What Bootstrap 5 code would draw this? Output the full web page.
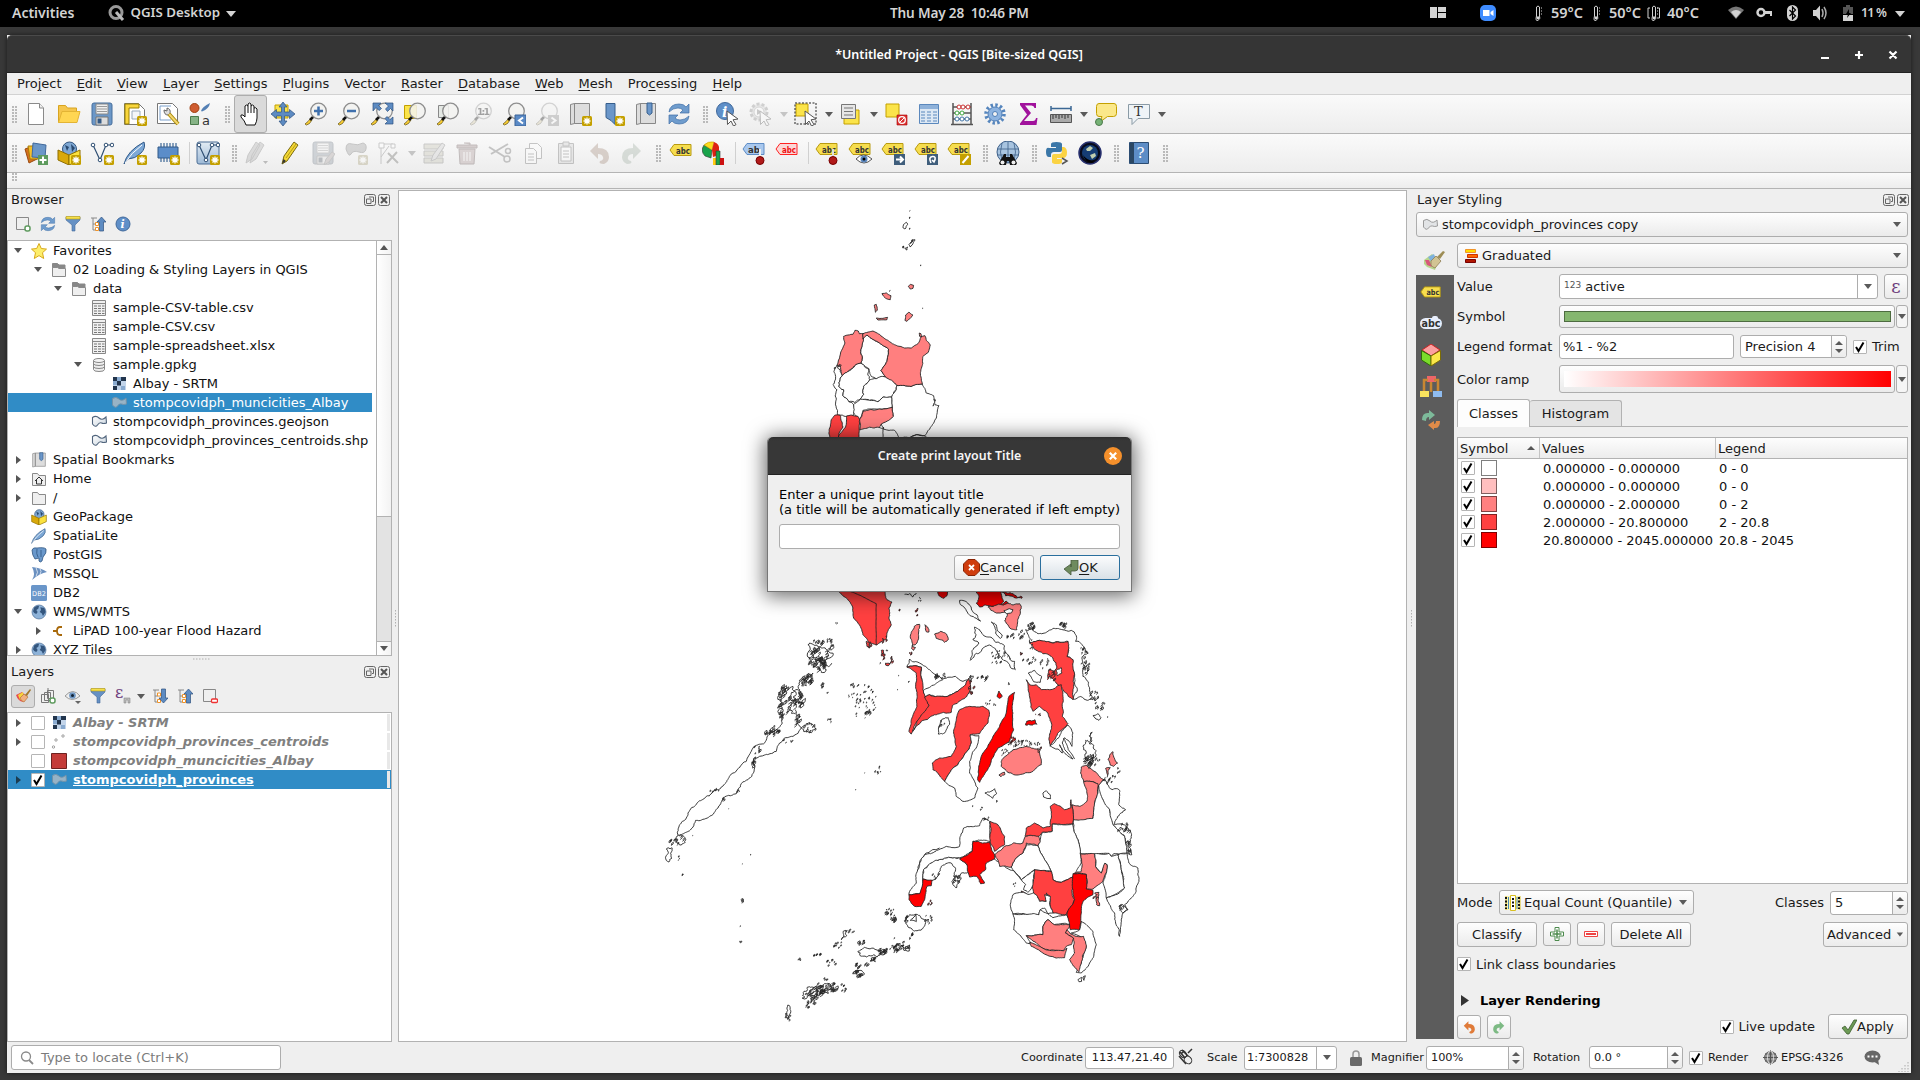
<!DOCTYPE html>
<html lang="en">
<head>
<meta charset="utf-8">
<title>QGIS</title>
<link href="https://cdn.jsdelivr.net/npm/bootstrap@5.3.0/dist/css/bootstrap.min.css" rel="stylesheet">
<style>
body{width:1920px;height:1080px;overflow:hidden;background:#393939;font:13px/15px "DejaVu Sans",sans-serif;color:#1a1a1a}
svg{display:block;flex:none;overflow:visible}
.shell{height:27px;background:#000;color:#d3d3d3;font:600 14px/27px "Noto Sans",sans-serif;position:relative}
.shell .clock{left:890px;top:-1px;white-space:pre;font-size:13.6px;letter-spacing:-.17px}
.win{margin:8px 0 0 7px;width:1904px;height:1038px;background:#efefef;box-shadow:0 0 5px #1b1b1b}
.ttl{height:38px;background:#353535;border-top:1px solid #4a4a4a;border-bottom:1px solid #222;border-radius:5px 5px 0 0;color:#fff;font:600 12.5px/37px "Noto Sans",sans-serif;position:relative}
.mnu{height:22px;border-bottom:1px solid #d2d2d2;padding-left:2.5px}
.mnu span{padding:0 7.55px;line-height:21px}
.mnu u,.dlg u{text-underline-offset:2px}
.tbar{border-bottom:1px solid #b4b4b4;background:linear-gradient(#fafafa,#ededed)}
.tbar.h39{height:39px}.tbar.h16{height:16px}
.tb{width:33px;height:32px;display:flex;align-items:center;justify-content:center;flex:none}
.tb svg{width:24px;height:24px}
.tb.on{height:38px;background:#dadada;border:1px solid #adadad;border-radius:3px}
.off{opacity:.34;filter:grayscale(.75)}
.grip{width:16px;flex:none;padding-left:7px}
.grip.g0{width:12.5px;padding-left:5px}
.grip::before{content:"";display:block;width:5px;height:17px;background:radial-gradient(circle at 1px 1px,#b8b8b8 .7px,transparent 1px) 0 0/3px 3px}
.vs{width:7px;flex:none;height:22px;border-left:1px solid #d0d0d0;transform:translateX(4px)}
.ar{width:12px;flex:none;display:flex;justify-content:center}
.ar::before,.dn::before{content:"";border:4px solid transparent;border-top:5px solid #5a5a5a;border-bottom:0}
.ar.lt{opacity:.3}
.pt{height:22px;padding:0 2px 0 4px}
.pt span{line-height:20px;padding-bottom:1px}
.pt svg{width:12px;height:12px;margin:-1px 0 0 2px}
.box{background:#fff;border:1px solid #b2b2b2;overflow:hidden}
.r19{height:19px;display:flex;align-items:center;white-space:nowrap;color:#111}
.r19>svg{width:16px;height:16px;margin-right:6px}
.r19.sel,.lsel{background:#308cc6;color:#fff}
.ex{width:20px;flex:none;display:flex;justify-content:center}
.ex.o::before{content:"";border:4px solid transparent;border-top:5px solid #555;border-bottom:0}
.ex.c::before{content:"";border:4px solid transparent;border-left:5px solid #555;border-right:0}
.ind1{padding-left:20px}.ind2{padding-left:40px}.ind3{padding-left:60px}.ind4{padding-left:80px}
.sb{width:15px;border-left:1px solid #b2b2b2}
.sb div{background:linear-gradient(90deg,#fff,#f3f3f3)}
.st svg{width:16px;height:16px}
.st .c25{width:25px;display:flex;justify-content:center;align-items:center;height:24px;flex:none}
.cb{width:14px;height:14px;border:1px solid #b5b5b5;background:#fff;flex:none;display:flex;align-items:center;justify-content:center;border-radius:1px}
.cb svg{width:12px;height:12px}
.lay .r19{font-weight:700;color:#808080;font-style:italic}
.lay .r19::after{content:"";margin-left:auto;width:3px;height:17px;background:#e8e8e8;margin-right:1px}
.lay .lsel{color:#fff;font-style:normal;text-decoration:underline}
.lay .lsel .ex.c::before{border-left-color:#1c3c50}
.q{border:1px solid #adadad;border-radius:3px;background:linear-gradient(#fefefe,#ebebeb);display:flex;align-items:center;flex:none;white-space:nowrap}
.in{border:1px solid #adadad;border-radius:3px;background:#fff;display:flex;align-items:center;flex:none;white-space:nowrap;padding-left:4px}
.dn{display:flex;align-items:center;justify-content:center;width:20px;height:100%;margin-left:auto}
.spn{margin-left:auto;width:15px;height:100%;border-left:1px solid #adadad;background:linear-gradient(#fefefe,#ebebeb);display:flex;flex-direction:column;justify-content:center;align-items:center;gap:4px;border-radius:0 3px 3px 0}
.spn::before{content:"";border:4px solid transparent;border-bottom:4px solid #5a5a5a;border-top:0}
.spn::after{content:"";border:4px solid transparent;border-top:4px solid #5a5a5a;border-bottom:0}
.lb{width:102px;flex:none}
.tabx{border:1px solid #b2b2b2;border-bottom:0;border-radius:3px 3px 0 0;display:flex;align-items:center;justify-content:center}
.strip{width:38px;background:#5c5c5c}
.strip svg{width:22px;height:22px;margin:0 0 10px 4px}
.hd{height:21px;border-bottom:1px solid #b2b2b2;background:linear-gradient(#fdfdfd,#ececec)}
.hd>div{padding-left:2px;display:flex;align-items:center;border-right:1px solid #c4c4c4}
.cls{height:18px;display:flex;align-items:center;color:#111;padding-left:3px}
.sw{width:16px;height:16px;border:1px solid #00000080;margin-left:6px;flex:none}
.stat{height:31px;font-size:11.3px;padding:0 0 0 4px}
.dlg{position:absolute;left:767px;top:437px;width:365px;height:155px;background:#efefef;border:1px solid #777;border-top:0;border-radius:5px 5px 0 0;box-shadow:0 2px 20px 2px #0009}
.dlg .dt{height:38px;background:linear-gradient(#2d2d2d,#373737 10%);border-bottom:1px solid #222;border-radius:5px 5px 0 0;color:#f5f5f5;font:600 12.4px/38px "Noto Sans",sans-serif;position:relative}
</style>
<script src="https://cdn.jsdelivr.net/npm/bootstrap@5.3.0/dist/js/bootstrap.bundle.min.js"></script>
</head>
<body>
<svg width="0" height="0" style="position:absolute">
<defs>
<linearGradient id="gl" x2="1" y2="1"><stop stop-color="#fff"/><stop offset="1" stop-color="#c9d4de"/></linearGradient>
<linearGradient id="gb" y2="1" x2="0"><stop stop-color="#e3ecf4"/><stop offset="1" stop-color="#9db9d6"/></linearGradient>
<g id="new"><rect x="14" y="14" width="10" height="10" rx="1.500" fill="#c4a000"/><path d="M19 15.500v7M15.500 19h7M16.500 16.500l5 5M21.500 16.500l-5 5" stroke="#fff" stroke-width="1.300"/></g>
<g id="lens"><path d="M1 22l3-2.500 2.500-3 1.500 1.500-2.500 3.500-3 1.500z" fill="#fcd033" stroke="#5a4a10" stroke-width=".7"/><path d="M6 18l4-4" stroke="#111" stroke-width="2.500"/><circle cx="14.500" cy="9" r="7.800" fill="#f2f2f0dd" stroke="#8f8f8f" stroke-width="1.300"/></g>
<g id="cur"><path d="M11 9l11 8-5 .8 3 4.800-2.500 1.400-2.500-5-3.500 3.500z" fill="#fff" stroke="#555"/></g>
<g id="tag"><path d="M1 8l4-5.500h17v11H5z" fill="#f6dd4e" stroke="#b89a10"/><text x="7" y="11.500" font-size="8.500" font-weight="700" font-family="DejaVu Sans" textLength="14" lengthAdjust="spacingAndGlyphs" fill="#333">abc</text></g>
<g id="globe"><circle cx="12" cy="12" r="10.500" fill="#8db2d8" stroke="#486a93"/><path d="M5 5q4-3 7-2l-1 4-3 2 2 3-2 3q-4-1-5-4zM14 5l6 1 2 6-4 6-2-4-3-2 2-3z" fill="#34567e"/></g>
<symbol id="doc" viewBox="0 0 24 24"><path d="M4.500 1.500h11l4 4.500v16.500h-15z" fill="#fff" stroke="#8a8a8a"/><path d="M15.500 1.500v4.500h4" fill="#eee" stroke="#8a8a8a"/></symbol>
<symbol id="open" viewBox="0 0 24 24"><path d="M1.500 20.500V3.500h7l2 2.500h9v4" fill="#f5c64c" stroke="#d8a420"/><path d="M1.500 20.500L5 9.500h18l-3 11z" fill="#ffd652" stroke="#e3b434"/></symbol>
<symbol id="save" viewBox="0 0 24 24"><rect x="2" y="1" width="20" height="22" rx="2" fill="#6b97c8" stroke="#476e9c"/><path d="M6 2h12v10H6z" fill="#efefef" stroke="#888"/><path d="M7 4.500h10M7 7h10M7 9.500h10" stroke="#999"/><path d="M6 15h12v8H6z" fill="#ddd" stroke="#777"/><path d="M7.500 16.500h4v5h-4z" fill="#355a85"/></symbol>
<symbol id="lay" viewBox="0 0 24 24"><path d="M1.500 1.500h14l6 6v15h-20z" fill="#fff" stroke="#777"/><path d="M2 2h14v4H6v16H2z" fill="#f9d63c" stroke="#9c8203"/><path d="M9 9h8v8H9z" fill="#f4f6f8" stroke="#9ab"/><use href="#new"/></symbol>
<symbol id="wrench" viewBox="0 0 24 24"><path d="M1.500 1.500h15l5 5v15h-20z" fill="#fff" stroke="#777"/><path d="M4 4h11M4 4v14h11" stroke="#7aa0cc" fill="none"/><path d="M8 8q0 5 4 5l2-2q1-4-3-5l0 3z" fill="#ddd" stroke="#666"/><path d="M13 12l9 10" stroke="#a88908" stroke-width="4"/><path d="M13 12l9 10" stroke="#f3d66f" stroke-width="2"/></symbol>
<symbol id="style" viewBox="0 0 24 24"><circle cx="5.500" cy="6" r="4.500" fill="#cf5c30" stroke="#a04010"/><path d="M12 9q1-4 9-8-1 6-8 8.500z" fill="#5480b4"/><path d="M1.500 14.500h8v8h-8z" fill="#86b386" stroke="#4b7a4b"/><text x="13" y="23" font-size="13" font-family="DejaVu Sans" fill="#333">a</text></symbol>
<symbol id="hand" viewBox="0 0 24 24"><path d="M8 23q-1-4-5-8-1-3 2-2l2 2V4q1.500-2 3 0V2q1.500-2 3 0v2q1.500-2 3 0v2q2-1 3 1v9q0 3-2 7z" fill="#fff" stroke="#111"/><path d="M10 4v7M13 4v7M16 6v5" stroke="#111"/></symbol>
<symbol id="pan" viewBox="0 0 24 24"><path d="M4 3h13v13H4z" fill="#fbe44a" stroke="#c4a000"/><path d="M12 0l4 5h-2.500v5h5V7.500L24 12l-5.500 4.500V14h-5v5H16l-4 5-4-5h2.500v-5h-5v2.500L0 12l5.500-4.500V10h5V5H8z" fill="#5d8bc2" stroke="#2e5280" stroke-width=".7"/></symbol>
<symbol id="zin" viewBox="0 0 24 24"><use href="#lens"/><path d="M14.500 4.500v9M10 9h9" stroke="#3f70ad" stroke-width="2.500"/></symbol>
<symbol id="zout" viewBox="0 0 24 24"><use href="#lens"/><path d="M10 9h9" stroke="#3f70ad" stroke-width="2.500"/></symbol>
<symbol id="zfull" viewBox="0 0 24 24"><use href="#lens"/><path d="M3 1h8l-2.500 2.500 3 3-2.500 2-3-3L3 9zM23 1v8l-2.500-2.500-3 3-2-2.500 3-3L15 1zM23 22h-8l2.500-2.500-2.500-3 2-2 3 3L23 15z" fill="#5d8bc2" stroke="#2e5280" stroke-width=".7"/></symbol>
<symbol id="zsel" viewBox="0 0 24 24"><path d="M1.500 3.500h12v13h-12z" fill="#fbe44a" stroke="#c4a000"/><use href="#lens"/></symbol>
<symbol id="zlay" viewBox="0 0 24 24"><path d="M2.500 3.500h10v12h-10z" fill="#e4e8e4" stroke="#888"/><use href="#lens"/></symbol>
<symbol id="z11" viewBox="0 0 24 24"><use href="#lens"/><text x="8" y="13" font-size="9.500" font-weight="700" font-family="DejaVu Sans" textLength="13">1:1</text></symbol>
<symbol id="zlast" viewBox="0 0 24 24"><use href="#lens"/><path d="M13 13h11v11H13z" fill="#5a8ac6" stroke="#3a6396"/><path d="M21 15.500l-4 3 4 3" stroke="#fff" stroke-width="2" fill="none"/></symbol>
<symbol id="znext" viewBox="0 0 24 24"><use href="#lens"/><path d="M13 13h11v11H13z" fill="#888"/><path d="M16.500 15.500l4 3-4 3" stroke="#fff" stroke-width="2" fill="none"/></symbol>
<symbol id="book" viewBox="0 0 24 24"><path d="M2.500 2.500l4-1v20l-4 1zM6.500 1.500h15v20h-15z" fill="#ddd" stroke="#888"/></symbol>
<symbol id="vnew" viewBox="0 0 24 24"><use href="#book"/><use href="#new"/></symbol>
<symbol id="bnew" viewBox="0 0 24 24"><path d="M5 1.500h9v21l-4-4-5-3z" fill="#6a96c9" stroke="#365e8c"/><use href="#new"/></symbol>
<symbol id="bmk" viewBox="0 0 24 24"><use href="#book"/><path d="M13 1h5v10l-2.500 2L13 11z" fill="#6a96c9" stroke="#365e8c"/></symbol>
<symbol id="ref" viewBox="0 0 24 24"><path d="M2 10Q3 2 12 2q5 0 7 3l3-3v9h-9l3-3q-2-2-5-2-5 0-9 4zM22 14q-1 8-10 8-5 0-7-3l-3 3v-9h9l-3 3q2 2 5 2 5 0 9-4z" fill="#6f9ccd" stroke="#3f6fa6" stroke-width=".7"/></symbol>
<symbol id="ident" viewBox="0 0 24 24"><circle cx="9" cy="9" r="8.500" fill="#5f8fc8" stroke="#41699b"/><text x="6" y="14.500" font-family="DejaVu Serif" font-style="italic" font-weight="700" font-size="14" fill="#fff">i</text><use href="#cur"/></symbol>
<symbol id="act" viewBox="0 0 24 24"><circle cx="10" cy="10" r="8" fill="#ccc" stroke="#888" stroke-width="3" stroke-dasharray="3 2"/><circle cx="10" cy="10" r="5" fill="#fff" stroke="#999"/><path d="M8 7v6l5-3z" fill="#777"/><use href="#cur"/></symbol>
<symbol id="sel" viewBox="0 0 24 24"><path d="M2 2h12v12H2z" fill="#fbe44a" stroke="#c4a000"/><path d="M1 1h21v21H1z" fill="none" stroke="#222" stroke-dasharray="2 1.500"/><use href="#cur"/></symbol>
<symbol id="form" viewBox="0 0 24 24"><path d="M5 8h15v14H5z" fill="#fbe44a" stroke="#c4a000"/><path d="M2.500 2.500h14v14h-14z" fill="#e6e6e6" stroke="#777"/><path d="M5 6h9M5 9.500h9M5 13h9" stroke="#777"/></symbol>
<symbol id="desel" viewBox="0 0 24 24"><path d="M2 2h13v13H2z" fill="#fbe44a" stroke="#c4a000"/><path d="M13 13h10v10H13z" fill="#d33" stroke="#a00" stroke-width=".6"/><circle cx="18" cy="18" r="3.300" fill="none" stroke="#fff" stroke-width="1.300"/><path d="M16 20l4-4" stroke="#fff"/></symbol>
<symbol id="tab" viewBox="0 0 24 24"><path d="M2.500 2.500h19v19h-19z" fill="#dde8f4" stroke="#5b88bd"/><path d="M3 3h18v4H3z" fill="#8fb2da"/><path d="M4 10h4M10 10h4M16 10h4M4 13h4M10 13h4M16 13h4M4 16h4M10 16h4M16 16h4M4 19h4M10 19h4M16 19h4" stroke="#5b88bd"/></symbol>
<symbol id="abac" viewBox="0 0 24 24"><path d="M3 1v21M21 1v21M1 22.500h22M3 5h18M3 11h18M3 17h18" stroke="#555" stroke-width="1.500"/><g stroke="#c33" fill="#fff"><circle cx="9" cy="5" r="2"/><circle cx="13" cy="5" r="2"/><circle cx="18" cy="5" r="2"/></g><g stroke="#4a4" fill="#fff"><circle cx="7" cy="11" r="2"/><circle cx="12" cy="11" r="2"/></g><g stroke="#47a" fill="#fff"><circle cx="7" cy="17" r="2"/><circle cx="12" cy="17" r="2"/><circle cx="17" cy="17" r="2"/></g></symbol>
<symbol id="gear" viewBox="0 0 24 24"><circle cx="12" cy="12" r="9" fill="none" stroke="#5585bd" stroke-width="3.500" stroke-dasharray="2.400 2.312"/><circle cx="12" cy="12" r="7" fill="#8db3e0" stroke="#4f7fb8"/><circle cx="12" cy="12" r="2.500" fill="#f3f3f3" stroke="#4f7fb8"/></symbol>
<symbol id="sigma" viewBox="0 0 24 24"><path d="M4 1h16v5h-1.500q-.5-2.500-3-2.500H9l6 7.500-7 8h9q2.500 0 3-3h1.500l-1 7H4v-1.500l7-9L4 3z" fill="#a1129c"/></symbol>
<symbol id="meas" viewBox="0 0 24 24"><path d="M2 6.500h20M2 4v5M22 4v5" stroke="#3b6794" stroke-width="1.500"/><path d="M1.500 12.500h21v8h-21z" fill="#aaa" stroke="#555"/><path d="M4 13v4M7 13v3M10 13v4M13 13v3M16 13v4M19 13v3" stroke="#333"/></symbol>
<symbol id="tip" viewBox="0 0 24 24"><path d="M5 1.500h15q2.500 0 2.500 3v7q0 3-3 3h-6L6 20l2-5.500H5q-2.500 0-2.500-3v-7q0-3 2.500-3z" fill="#fbe88a" stroke="#c4a000"/><circle cx="5" cy="20" r="3.500" fill="#76b276" stroke="#4b7a4b"/></symbol>
<symbol id="txt" viewBox="0 0 24 24"><path d="M1.500 2.500h21v14H11l-6 6v-6H1.500z" fill="#eef3f7" stroke="#8a9aa5"/><text x="7" y="14" font-size="13" font-family="DejaVu Serif" fill="#333">T</text></symbol>
<symbol id="dsm" viewBox="0 0 24 24"><path d="M1 8l8-3 4 13-8 4z" fill="#d4701e" stroke="#9a4a10"/><path d="M4 5h10v13H6z" fill="#f4bf2b" stroke="#a87d08"/><path d="M9 2l13 2-1 13-13-1z" fill="#6b97c8" stroke="#41699b"/><path d="M14 14h10v10H14z" fill="#5d9a5d"/><path d="M19 15.500v7M15.500 19h7" stroke="#fff" stroke-width="2"/></symbol>
<symbol id="gpkg" viewBox="0 0 24 24"><circle cx="12.500" cy="8" r="7" fill="#7fa8d4" stroke="#31557f"/><path d="M8 4l4 2-2 4zM14 3l4 4-3 4z" fill="#29496f"/><path d="M1 9l11 5v10L1 19z" fill="#d9a90b" stroke="#8f6f00"/><path d="M12 14l11-5v10l-11 5z" fill="#fbe23f" stroke="#8f6f00"/></symbol>
<symbol id="gpkgn" viewBox="0 0 24 24"><use href="#gpkg"/><use href="#new"/></symbol>
<symbol id="shp" viewBox="0 0 24 24"><path d="M3 4l7 15L16 4h6" fill="none" stroke="#2f4f73" stroke-width="1.200"/><g fill="#fff" stroke="#2f4f73"><circle cx="3" cy="4" r="1.800"/><circle cx="10" cy="19" r="1.800"/><circle cx="16" cy="4" r="1.800"/><circle cx="22" cy="4" r="1.800"/></g></symbol>
<symbol id="shpn" viewBox="0 0 24 24"><use href="#shp"/><use href="#new"/></symbol>
<symbol id="fea" viewBox="0 0 24 24"><path d="M1 23Q4 10 21 1q2 6-3 11-6 6-13 6z" fill="#7da8d6" stroke="#325a88"/><path d="M2 22Q8 12 19 4" stroke="#fff" fill="none"/></symbol>
<symbol id="fean" viewBox="0 0 24 24"><use href="#fea"/><use href="#new"/></symbol>
<symbol id="chip" viewBox="0 0 24 24"><path d="M5 2v19M8 2v19M11 2v19M14 2v19M17 2v19M20 2v19" stroke="#3d6795" stroke-width="1.200"/><path d="M2 6h20v11H2z" fill="#5b8dc9" stroke="#325a88"/><use href="#new"/></symbol>
<symbol id="virt" viewBox="0 0 24 24"><rect x="1" y="1" width="22" height="22" rx="2" fill="url(#gb)" stroke="#4a6d94"/><use href="#shp"/><use href="#new"/></symbol>
<symbol id="pens" viewBox="0 0 24 24"><path d="M1 22l2-8L11 1l4 3-8 14zM5 22l2-8L15 1l4 3-8 14z" fill="#aaa" stroke="#777"/><path d="M18 20h5l-2.500 3z" fill="#555"/></symbol>
<symbol id="pen" viewBox="0 0 24 24"><path d="M4 23l2-8L16 1l4 3L9 20z" fill="#f4d733" stroke="#7a6a10"/><path d="M8 17L18 3" stroke="#b39b1c"/><path d="M4 23l1.500-5 2.500 2z" fill="#333"/></symbol>
<symbol id="savee" viewBox="0 0 24 24"><use href="#save"/><path d="M13 24l2-6 6-7 3 2-6 8z" fill="#b99" stroke="#777"/></symbol>
<symbol id="addp" viewBox="0 0 24 24"><path d="M2 8q0-7 6-5t11-1q4 1 3 6t-7 3-8 2-5-5z" fill="#999" stroke="#666"/><use href="#new"/></symbol>
<symbol id="vert" viewBox="0 0 24 24"><path d="M4 23V3h12M4 16l8-11" stroke="#777" fill="none"/><path d="M2 2h5v5H2zM14 3h4v4h-4z" fill="#fff" stroke="#777"/><path d="M11 12l10 10M20 11L10 22" stroke="#665" stroke-width="2"/></symbol>
<symbol id="mod" viewBox="0 0 24 24"><path d="M2 3h19v5H2zM2 10h19v5H2zM2 17h19v5H2z" fill="#c9c480" stroke="#776"/><path d="M9 20l2-6L20 2l3 2-9 14z" fill="#ccc" stroke="#777"/></symbol>
<symbol id="del" viewBox="0 0 24 24"><path d="M4 8h16l-1 15H5z" fill="#d88" stroke="#844"/><path d="M2 4h20v3H2zM9 2h6v2" fill="#c77" stroke="#844"/><path d="M9 11v9M12 11v9M15 11v9" stroke="#fff"/></symbol>
<symbol id="cut" viewBox="0 0 24 24"><path d="M1 6l16 10M3 13L20 3" stroke="#666" stroke-width="2"/><circle cx="19" cy="18" r="3" fill="none" stroke="#666" stroke-width="1.500"/><circle cx="20" cy="10" r="2.500" fill="none" stroke="#666" stroke-width="1.500"/></symbol>
<symbol id="copy" viewBox="0 0 24 24"><path d="M8.500 2.500h8l4 4v11h-12z" fill="#fff" stroke="#666"/><path d="M4.500 7.500h8l3 3v12h-11z" fill="#fff" stroke="#666"/><path d="M7 13h6M7 16h6M7 19h6" stroke="#666"/></symbol>
<symbol id="paste" viewBox="0 0 24 24"><path d="M4.500 2.500h15v20h-15z" fill="#ccc" stroke="#666"/><path d="M7 6h10v14H7z" fill="#fff" stroke="#666"/><path d="M9 1h6v4H9zM9 10h6M9 13h6M9 16h6" stroke="#666" fill="#ccc"/></symbol>
<symbol id="undo" viewBox="0 0 24 24"><path d="M3 10l8-8v5q11 0 11 9 0 5-5 7-6 0-4-3 4-1 3-4t-5-3v5z" fill="#e07b39"/></symbol>
<symbol id="redo" viewBox="0 0 24 24"><path d="M21 10l-8-8v5Q2 7 2 16q0 5 5 7 6 0 4-3-4-1-3-4t5-3v5z" fill="#7dba84"/></symbol>
<symbol id="label" viewBox="0 0 24 24"><use href="#tag" y="1"/></symbol>
<symbol id="slabel" viewBox="0 0 24 24"><use href="#tag" y="5"/></symbol>
<symbol id="diag" viewBox="0 0 24 24"><path d="M10 9L2 4q-4 6 1 11l6 2z" fill="#19a34a" stroke="#333" stroke-width=".6"/><path d="M2 4q4-4 10-3l-2 8z" fill="#fcdc1b" stroke="#b80" stroke-width=".5"/><path d="M10 9l2-8q6 2 5 8t-6 7z" fill="#d21"/><path d="M11 17h3v7h-3z" fill="#fc1"/><path d="M14 10h4v14h-4z" fill="#19a34a" stroke="#333" stroke-width=".6"/><path d="M18 17h4v7h-4z" fill="#c11"/></symbol>
<symbol id="pin" viewBox="0 0 24 24"><path d="M1 8l4-5.500h17v11H5z" fill="#a9c8ee" stroke="#5e8cc5"/><text x="6" y="11.500" font-size="8.500" font-weight="700" font-family="DejaVu Sans" fill="#333">ab</text><path d="M18 8v8" stroke="#eee" stroke-width="2"/><circle cx="18" cy="19.500" r="4" fill="#b11a1a" stroke="#700"/></symbol>
<symbol id="rlab" viewBox="0 0 24 24"><path d="M1 8l4-5.500h17v11H5z" fill="#fbd6d6" stroke="#f22"/><text x="7" y="11.500" font-size="8.500" font-weight="700" font-family="DejaVu Sans" textLength="14" lengthAdjust="spacingAndGlyphs" fill="#e11">abc</text></symbol>
<symbol id="t1" viewBox="0 0 24 24"><use href="#tag"/><path d="M18 8v8" stroke="#ddd" stroke-width="2"/><circle cx="18" cy="19.500" r="4" fill="#b11a1a" stroke="#700"/></symbol>
<symbol id="t2" viewBox="0 0 24 24"><use href="#tag"/><path d="M8 18q7-8 16 0-8 8-16 0z" fill="#fff" stroke="#555"/><circle cx="16" cy="18" r="3.500" fill="#5a86bd"/><circle cx="16" cy="18" r="1.500"/></symbol>
<symbol id="t3" viewBox="0 0 24 24"><use href="#tag"/><path d="M13 13h11v11H13z" fill="#3f5e7c"/><path d="M15 18.500h7M19 15.500l3 3-3 3" stroke="#fff" stroke-width="2" fill="none"/></symbol>
<symbol id="t4" viewBox="0 0 24 24"><use href="#tag"/><path d="M13 13h11v11H13z" fill="#3f5e7c"/><path d="M17 22q-3-6 1.500-6.500T20 21l-2-2" stroke="#fff" stroke-width="1.600" fill="none"/></symbol>
<symbol id="t5" viewBox="0 0 24 24"><use href="#tag"/><path d="M13 13h11v11H13z" fill="#c4a000"/><path d="M15.500 22l6-7" stroke="#fff" stroke-width="2"/></symbol>
<symbol id="bino" viewBox="0 0 24 24"><circle cx="12" cy="11" r="11" fill="#a8c4e0" stroke="#3d5f88"/><path d="M2 8h20M2 14h20M12 0v22M6 2q-3 9 0 18M18 2q3 9 0 18" stroke="#3d5f88" stroke-width=".8" fill="none"/><path d="M3 22l5-9h2v3h4v-3h2l5 9-1 2h-6l-1-4h-2l-1 4H4z" fill="#111"/><circle cx="6.500" cy="21.500" r="2" fill="#eee"/><circle cx="17.500" cy="21.500" r="2" fill="#eee"/></symbol>
<symbol id="py" viewBox="0 0 24 24"><path d="M6 6V3q0-2 5.500-2T17 3v6q0 2-2 2H9q-3 0-3 3v2H4q-3 0-3-5t3-4h7V6z" fill="#3b77a8"/><path d="M17 6h2q3 1 3 5.500T19 17h-7v1h5v3q0 2-5 2t-5-2v-6q0-2 2-2h5q3 0 3-3z" fill="#fbd343"/><path d="M17 17l5 3-5 3" fill="none" stroke="#555" stroke-width="1.500"/></symbol>
<symbol id="earth" viewBox="0 0 24 24"><circle cx="12" cy="12" r="11" fill="#080b1c" stroke="#27306e" stroke-width="1.500"/><circle cx="12" cy="12" r="8" fill="#163d74"/><path d="M8 8l4-3 3 2-3 3-3 0zM12 14l5-2 1 3-4 3z" fill="#c2cfb0"/><path d="M5 14q5 7 12 5l-3 3q-7-1-9-8z" fill="#000"/></symbol>
<symbol id="help" viewBox="0 0 24 24"><path d="M2.500 1.500h19v21h-19z" fill="#5d8dc6" stroke="#2c4d73"/><path d="M3 2h4v20H3z" fill="#2b4763"/><text x="9.500" y="17" font-size="15" font-family="DejaVu Serif" fill="#fff">?</text></symbol>
<symbol id="float" viewBox="0 0 12 12"><rect x=".5" y=".5" width="11" height="11" rx="2" fill="none" stroke="#666"/><path d="M5 3h4.500v4.500H8M2.500 5H7v4.500H2.500z" fill="none" stroke="#666"/></symbol>
<symbol id="close" viewBox="0 0 12 12"><rect x=".5" y=".5" width="11" height="11" rx="2" fill="none" stroke="#666"/><path d="M3 3l6 6M9 3l-6 6" stroke="#555" stroke-width="2"/></symbol>
<symbol id="addl" viewBox="0 0 16 16"><path d="M1.500 1.500h12v12h-12z" fill="none" stroke="#888"/><rect x="10" y="10" width="5" height="5" rx="2" fill="#fff" stroke="#5d9a5d" stroke-width="1.500"/></symbol>
<symbol id="fun" viewBox="0 0 16 16"><path d="M1 1h14v3l-5 5v6H7V9L1 4z" fill="#6590c4" stroke="#41699b" stroke-width=".6"/><path d="M1 .5h14v2.500H1z" fill="#f5e04a" stroke="#b89a10" stroke-width=".6"/></symbol>
<symbol id="col" viewBox="0 0 16 16"><path d="M1 2h6M3 2v12h4M3 8h3" stroke="#888" fill="none"/><path d="M5.500 6.500h3v3h-3zM5.500 11.500h3v3h-3z" fill="#fff" stroke="#f0942a"/><path d="M11.500 1l4.500 5h-2.500v9h-4V6H7z" fill="#5d8bc2" stroke="#2e5280" stroke-width=".7"/></symbol>
<symbol id="expd" viewBox="0 0 16 16"><path d="M1 2h6M3 2v12h4M3 8h3" stroke="#888" fill="none"/><path d="M5.500 5h3v3h-3zM5.500 11.500h3v3h-3z" fill="#fff" stroke="#f0942a"/><path d="M11.500 15L16 10h-2.500V1h-4v9H7z" fill="#5d8bc2" stroke="#2e5280" stroke-width=".7"/></symbol>
<symbol id="info" viewBox="0 0 16 16"><circle cx="8" cy="8" r="7" fill="#5f8fc8" stroke="#41699b"/><text x="5.500" y="12" font-family="DejaVu Serif" font-style="italic" font-weight="700" font-size="11" fill="#fff">i</text></symbol>
<symbol id="star" viewBox="0 0 16 16"><path d="M8 .5l2.300 5 5.200.6-4 3.600 1.200 5.800L8 12.600 3.300 15.500l1.200-5.800-4-3.600 5.200-.6z" fill="#fdee6b" stroke="#d8a81a"/></symbol>
<symbol id="fol" viewBox="0 0 16 16"><path d="M1.500 2.500h5l1.500 2h6.500v10h-13z" fill="#efefef" stroke="#8a8a8a"/></symbol>
<symbol id="folo" viewBox="0 0 16 16"><path d="M1.500 1.500h5l1.500 1.500h6v3h-12.500z" fill="#888" stroke="#888"/><path d="M1.500 14.500v-9h5l1.500 1h6.500v8z" fill="#efefef" stroke="#8a8a8a"/></symbol>
<symbol id="home" viewBox="0 0 16 16"><use href="#fol"/><path d="M4 10l4-4 4 4M5.500 9v4h5V9" stroke="#333" fill="none"/></symbol>
<symbol id="csv" viewBox="0 0 16 16"><path d="M1.500.5h13v15h-13z" fill="#f0f0f0" stroke="#888"/><path d="M1.500 3.500h13" stroke="#888"/><path d="M3 6h3M7 6h3M11 6h2.500M3 8.500h3M7 8.500h3M11 8.500h2.500M3 11h3M7 11h3M11 11h2.500M3 13.500h3M7 13.500h3M11 13.500h2.500" stroke="#777"/></symbol>
<symbol id="db" viewBox="0 0 16 16"><path d="M2.500 3.500v9q0 2 5.500 2t5.500-2v-9" fill="#eee" stroke="#888"/><ellipse cx="8" cy="3.500" rx="5.500" ry="2" fill="#f4f4f4" stroke="#888"/><path d="M2.500 6.500q0 2 5.500 2t5.500-2M2.500 9.500q0 2 5.500 2t5.500-2" fill="none" stroke="#888"/></symbol>
<symbol id="ras" viewBox="0 0 16 16"><path d="M2 1h13v13H2z" fill="#c3d5ea"/><path d="M2 1h4v4H2zM10 1h5v4h-5zM6 5h4v4.500H6zM2 10h4v4H2z" fill="#22354d"/><path d="M6 1h4v4H6zM2 5h4v4H2zM10 10h4v4h-4z" fill="#8aabd0"/></symbol>
<symbol id="poly" viewBox="0 0 16 16"><path d="M1.500 3.500Q5 1 8 4t7-1l.5 6q-3 1-5 0t-4 2-5-1z" fill="url(#gl)" stroke="#51657d" stroke-width="1.100"/></symbol>
<symbol id="polyg" viewBox="0 0 16 16"><path d="M1.500 3.500Q5 1 8 4t7-1l.5 6q-3 1-5 0t-4 2-5-1z" fill="#a9bac6" stroke="#7d93a3" opacity=".85"/></symbol>
<symbol id="polyl" viewBox="0 0 16 16"><path d="M1.500 3.500Q5 1 8 4t7-1l.5 6q-3 1-5 0t-4 2-5-1z" fill="#e2e4e6" stroke="#9b9b9b"/></symbol>
<symbol id="ele" viewBox="0 0 16 16"><path d="M1 3Q2 0 6 1q7-1 9 1 1 4-3 8l-1 4q-2 2-3 0V11l-4 1Q1 8 1 3z" fill="#6a98cb" stroke="#305680" stroke-width=".8"/><path d="M6 2q-1 5 1 8M10 3q0 4 0 7" stroke="#305680" fill="none" stroke-width=".8"/></symbol>
<symbol id="ms" viewBox="0 0 16 16"><path d="M1 1q10 1 15 5Q9 7 1 14 5 8 1 1z" fill="#6a90c0"/><path d="M5 1.500q3 5 0 9M9 2.500q2 3 0 6" stroke="#eaf0f7" stroke-width=".8" fill="none"/></symbol>
<symbol id="db2" viewBox="0 0 16 16"><rect width="16" height="16" rx="1.500" fill="#6a96c9"/><text x="1" y="10.500" font-size="6.500" font-family="DejaVu Sans" textLength="14" fill="#fff">DB2</text></symbol>
<symbol id="glb" viewBox="0 0 24 24"><use href="#globe"/></symbol>
<symbol id="fork" viewBox="0 0 16 16"><path d="M2 8h4M11 4H9Q6 4 6 8t3 4h2" stroke="#a8690b" stroke-width="1.800" fill="none"/></symbol>
<symbol id="brush" viewBox="0 0 22 22"><path d="M1 11l8-6 7 6-4 10-8-3-3-3z" fill="#b6d68c"/><path d="M2 11l4 0 3 7-5-2z" fill="#d8577a"/><path d="M5 8l6-3 2 5-4 4z" fill="#7fb2dd"/><path d="M8 12l5-5 5 5-6 7q-3-1-4-3z" fill="#d2c493" stroke="#8f7f55" stroke-width=".8"/><path d="M14 8l6-6 2 1-5 7z" fill="#9d8d55"/></symbol>
<symbol id="brush2" viewBox="0 0 16 16"><path d="M1 7l6-3 4 4-3 6q-5-1-7-7z" fill="#e84d4d"/><path d="M3 7l5-3 1 6-4 2z" fill="#f5d33b"/><path d="M5 10l4-4 4 3-4 5q-3-1-4-4z" fill="#f0b080" stroke="#b8743a" stroke-width=".7"/><path d="M10 7l5-6 1 1-4 6z" fill="#a0782e"/></symbol>
<symbol id="addg" viewBox="0 0 16 16"><path d="M1.500 6.500h7v8h-7zM4.500 4.500h6v8h-6zM7.500 2.500h6v8h-6zM8 0v7" fill="none" stroke="#777"/><rect x="10" y="10" width="5" height="5" rx="2" fill="#fff" stroke="#5d9a5d" stroke-width="1.500"/></symbol>
<symbol id="eye" viewBox="0 0 16 16"><path d="M0 8q8-9 15 0-8 7-15 0z" fill="#eee" stroke="#999"/><circle cx="7.500" cy="7.500" r="3.300" fill="#6e96c2"/><circle cx="7.500" cy="7.500" r="1.500" fill="#123"/><path d="M10 13h6l-3 3z" fill="#666"/></symbol>
<symbol id="eps" viewBox="0 0 16 16"><text x="0" y="10" font-size="16" font-family="DejaVu Serif" fill="#6d3d7c">ε</text><path d="M9 15v-5h6v5h-2v-3h-2v3z" fill="#bbb" stroke="#888" stroke-width=".6"/></symbol>
<symbol id="rem" viewBox="0 0 16 16"><path d="M1.500 1.500h12v12h-12z" fill="none" stroke="#888"/><rect x="9.500" y="11" width="6" height="3.500" rx="1" fill="#fff" stroke="#e33" stroke-width="1.300"/></symbol>
<symbol id="pts" viewBox="0 0 16 16"><g fill="none" stroke="#888" stroke-width=".8"><circle cx="2.500" cy="13" r="1.200"/><circle cx="5" cy="6" r="1.200"/><circle cx="12" cy="2" r="1.200"/></g></symbol>
<symbol id="redsq" viewBox="0 0 16 16"><path d="M.5.500h15v15H.5z" fill="#c43c39" stroke="#6e2220"/></symbol>
<symbol id="chk" viewBox="0 0 12 12"><path d="M2 6l2.500 4L9.500 1.500" fill="none" stroke="#000" stroke-width="2"/></symbol>
<symbol id="grad" viewBox="0 0 16 16"><path d="M1.500 1.500h10v3h-10z" fill="#fd0" stroke="#f0942a"/><path d="M3.500 6.500h10v3h-10z" fill="#f60" stroke="#c30"/><path d="M1.500 11.500h10v3h-10z" fill="#b11500" stroke="#700"/></symbol>
<symbol id="abcw" viewBox="0 0 22 22"><rect y="6" width="22" height="11" rx="5.500" fill="#e8eefc"/><rect x="12" y="4" width="6" height="6" rx="2" fill="#e8eefc"/><text x="1.500" y="15" font-size="11" font-weight="700" font-family="DejaVu Sans" textLength="19" lengthAdjust="spacingAndGlyphs" fill="#333">abc</text></symbol>
<symbol id="cube" viewBox="0 0 22 22"><path d="M11 0l9 6-9 6-9-6z" fill="#fba0a0" stroke="#c22"/><path d="M1.500 6.500L11 12v10l-9.500-6z" fill="#7bdc2b" stroke="#2d6b0a"/><path d="M20.500 6.500L11 12v10l9.500-6z" fill="#fbe84a" stroke="#7c6c05"/></symbol>
<symbol id="dia" viewBox="0 0 22 22"><path d="M7 0h9v6H7z" fill="#e66"/><path d="M8 4H4v12M11 6v10M14 4h4v12" stroke="#c88732" stroke-width="2.500" fill="none"/><path d="M0 15h9v6H0z" fill="#f9e35e"/><path d="M13 15h9v6h-9z" fill="#8fbcf0"/></symbol>
<symbol id="hist" viewBox="0 0 22 22"><path d="M2 12q0-8 7-7V2l6 5-6 5V9q-3 0-3 4z" fill="#7dba9a"/><path d="M20 13q0 8-6 7v2l-6-5 6-4v3q2 0 2-3z" fill="#e08b49"/></symbol>
<symbol id="quan" viewBox="0 0 16 16"><path d="M1 1h14v14H1z" fill="#fbf3b0"/><path d="M5.500.5h5v15h-5zM1 1v14M15 1v14" fill="#fff" stroke="#d8bf20"/><path d="M1 2v12M8 3v10M14 2v12" stroke="#111" stroke-width="2" stroke-dasharray="2 1.500"/><path d="M3.500 2v12M12 2v12" stroke="#48b"/></symbol>
<symbol id="okic" viewBox="0 0 16 16"><path d="M15 0v8q0 3-3 3H8v4L1 9l7-5v3h0V0z" fill="#6e8b5e" stroke="#45573b" stroke-width=".8"/></symbol>
<symbol id="apl" viewBox="0 0 16 16"><path d="M1 9l3-2 3 4L13 1l3 0L8 15H6z" fill="#6c9a55" stroke="#3f5e30" stroke-width=".8"/></symbol>
<symbol id="thermo" viewBox="0 0 8 16"><path d="M2.500 11V2q1.500-2 3 0v9q1.500 3-1.500 4.300T2.500 11z" fill="none" stroke="#d3d3d3"/><circle cx="4" cy="12.800" r="1.500" fill="#d3d3d3"/><path d="M7 3h1M7 6h1M7 9h1" stroke="#d3d3d3"/></symbol>
</defs>
</svg>

<div class="shell d-flex">
 <span style="margin-left:12px;line-height:25px">Activities</span>
 <svg width="17" height="17" viewBox="0 0 17 17" style="margin:5px 5px 0 34px"><circle cx="8" cy="7.500" r="6" fill="none" stroke="#999" stroke-width="3"/><path d="M8 7l7 8" stroke="#bbb" stroke-width="3"/></svg>
 <span style="line-height:25px;font-size:13.3px">QGIS Desktop</span>
 <svg width="10" height="6" style="margin:11px 0 0 6px"><path d="M0 0h10L5 6z" fill="#d3d3d3"/></svg>
 <span class="clock position-absolute">Thu May 28  10:46 PM</span>
 <div class="position-absolute" style="left:1430px;top:0">
 <svg width="490" height="27" viewBox="1430 0 490 27" fill="#d3d3d3"><path d="M1430 7h7v11h-7zM1438 7h8v5h-8zM1438 13h8v5h-8z"/><rect x="1480" y="5" width="16" height="16" rx="5" fill="#3f8cff"/><path d="M1483 10h6.500v6h-6.500zM1490.500 12l3-2v6l-3-2z" fill="#fff"/>
 <use href="#thermo" x="1534" y="5" width="8" height="16"/><use href="#thermo" x="1592" y="5" width="8" height="16"/><use href="#thermo" x="1650" y="5" width="8" height="16"/><path d="M1650 8h-2v10h2M1657 8h2.500v10h-2.500" fill="none" stroke="#d3d3d3"/>
 <g font-family="Noto Sans" font-weight="600" font-size="14.500"><text x="1551" y="18" textLength="32">59°C</text><text x="1609" y="18" textLength="32">50°C</text><text x="1667" y="18" textLength="32">40°C</text><text x="1861" y="17" font-size="12.500" textLength="26">11 %</text></g>
 <path d="M1728 10q8-7 16 0l-8 9z" fill="#777"/><path d="M1731 12q5-4 10 0l-5 6z"/><circle cx="1761" cy="12.500" r="3.500" fill="none" stroke="#d3d3d3" stroke-width="2.500"/><path d="M1764 11h8v5h-2v-2h-6z"/><rect x="1787" y="5" width="11" height="16" rx="5.500"/><path d="M1789.500 10l6 6-3 3V7l3 3-6 6" fill="none" stroke="#000" stroke-width="1.200"/><path d="M1813 10h3l4-4.500v15l-4-4.500h-3z"/><path d="M1822 9q2 4 0 8M1824 7q4 6 0 12" fill="none" stroke="#aaa" stroke-width="1.500"/><path d="M1843 7h3V5h4v2h3v7h-10z" fill="#555"/><path d="M1843 15h10v6h-10z"/><path d="M1849 9l-3 5h2l-1 4 4-5h-2z" fill="#000"/><path d="M1895 11h10l-5 6z"/></svg></div>
</div>

<div class="win d-flex flex-column">
 <div class="ttl text-center"><span>*Untitled Project - QGIS [Bite-sized QGIS]</span>
 <svg class="position-absolute" style="right:7px;top:13px" width="86" height="12" viewBox="0 0 86 12"><path d="M3 9h8M41 6h-4M37 6h8M41 2v8M71.500 2.500l7 7M78.500 2.500l-7 7" stroke="#fff" stroke-width="2.200"/></svg></div>
 <div class="mnu d-flex"><span>Pro<u>j</u>ect</span><span><u>E</u>dit</span><span><u>V</u>iew</span><span><u>L</u>ayer</span><span><u>S</u>ettings</span><span><u>P</u>lugins</span><span>Vect<u>o</u>r</span><span><u>R</u>aster</span><span><u>D</u>atabase</span><span><u>W</u>eb</span><span><u>M</u>esh</span><span>Pro<u>c</u>essing</span><span><u>H</u>elp</span></div>
 <div class="tbar h39 d-flex align-items-center" id="bar1"></div>
 <div class="tbar h39 d-flex align-items-center" id="bar2"></div>
 <div class="tbar h16"><div class="grip g0 overflow-hidden" style="height:9px"></div></div>

 <div class="d-flex" style="height:853px">
  <div class="d-flex flex-column" style="width:385px">
   <div class="pt d-flex align-items-center"><span class="me-auto">Browser</span><svg><use href="#float"/></svg><svg><use href="#close"/></svg></div>
   <div class="st d-flex" style="height:29px;padding:1px 0 0 3px"><span class="c25"><svg><use href="#addl"/></svg></span><span class="c25"><svg><use href="#ref"/></svg></span><span class="c25"><svg><use href="#fun"/></svg></span><span class="c25"><svg><use href="#col"/></svg></span><span class="c25"><svg><use href="#info"/></svg></span></div>
   <div class="box d-flex" style="height:416px"><div class="flex-grow-1" id="tree"></div>
    <div class="sb d-flex flex-column"><div class="d-flex align-items-center justify-content-center" style="height:14px;border-bottom:1px solid #b2b2b2"><svg width="8" height="5"><path d="M0 5h8L4 0z" fill="#555"/></svg></div><div style="height:262px;border-bottom:1px solid #b2b2b2"></div><div style="height:124px;background:#e3e3e3"></div><div class="d-flex align-items-center justify-content-center" style="height:14px;border-top:1px solid #b2b2b2"><svg width="8" height="5"><path d="M0 0h8L4 5z" fill="#555"/></svg></div></div>
   </div>
   <div style="height:5px"><svg width="18" height="4" style="margin:2px 0 0 186px"><path d="M0 1h18" stroke="#b0b0b0" stroke-dasharray="1.500 1.500"/></svg></div>
   <div class="pt d-flex align-items-center"><span class="me-auto">Layers</span><svg><use href="#float"/></svg><svg><use href="#close"/></svg></div>
   <div class="st d-flex" style="height:29px;padding:1px 0 0 3px"><span class="c25"><span class="q justify-content-center" style="width:24px;height:23px;background:#dadada"><svg><use href="#brush2"/></svg></span></span><span class="c25"><svg><use href="#addg"/></svg></span><span class="c25"><svg><use href="#eye"/></svg></span><span class="c25"><svg><use href="#fun"/></svg></span><span class="c25"><svg><use href="#eps"/></svg></span><span class="ar align-items-center" style="height:24px"></span><span class="c25"><svg><use href="#expd"/></svg></span><span class="c25"><svg><use href="#col"/></svg></span><span class="c25"><svg><use href="#rem"/></svg></span></div>
   <div class="box lay flex-grow-1">
    <div class="r19"><span class="ex c"></span><span class="cb" style="margin:0 6px 0 3px"></span><svg><use href="#ras"/></svg>Albay - SRTM</div>
    <div class="r19"><span class="ex c"></span><span class="cb" style="margin:0 6px 0 3px"></span><svg><use href="#pts"/></svg>stompcovidph_provinces_centroids</div>
    <div class="r19"><span class="ex"></span><span class="cb" style="margin:0 6px 0 3px"></span><svg><use href="#redsq"/></svg>stompcovidph_muncicities_Albay</div>
    <div class="r19 lsel"><span class="ex c"></span><span class="cb" style="margin:0 6px 0 3px"><svg><use href="#chk"/></svg></span><svg><use href="#polyg"/></svg>stompcovidph_provinces</div>
   </div>
  </div>
  <div style="width:6px;padding:421px 0 0 2px"><svg width="3" height="18"><path d="M1.500 0v18" stroke="#b0b0b0" stroke-dasharray="1.500 1.500"/></svg></div>
  <div class="box" style="width:1009px;margin-top:1px"><svg id="map" width="1007" height="850" viewBox="399.400 191.300 1007 850" style="overflow:hidden"></svg></div>
  <div style="width:9px;padding:421px 0 0 3px"><svg width="3" height="18"><path d="M1.500 0v18" stroke="#b0b0b0" stroke-dasharray="1.500 1.500"/></svg></div>
  <div class="d-flex flex-column" style="width:492px">
   <div class="pt d-flex align-items-center" style="margin-right:-3px;padding-left:1px"><span class="me-auto">Layer Styling</span><svg><use href="#float"/></svg><svg><use href="#close"/></svg></div>
   <div class="q" style="height:25px;margin:1px 0 6px;padding-left:5px"><svg width="16" height="16" class="me-1"><use href="#polyl"/></svg>stompcovidph_provinces copy<span class="dn"></span></div>
   <div class="d-flex" style="height:796px">
    <div style="width:41px"><svg width="22" height="22" style="margin:6px 0 4px 7px"><use href="#brush"/></svg>
     <div class="strip" style="height:764px;padding-top:5px"><svg><use href="#slabel"/></svg><svg><use href="#abcw"/></svg><svg><use href="#cube"/></svg><svg><use href="#dia"/></svg><svg><use href="#hist"/></svg></div></div>
    <div class="d-flex flex-column" style="width:451px">
     <div class="q" style="height:25px;padding-left:6px"><svg width="16" height="16" style="margin-right:2px"><use href="#grad"/></svg>Graduated<span class="dn"></span></div>
     <div class="d-flex align-items-center" style="height:25px;margin-top:6px"><span class="lb">Value</span><span class="in" style="width:319px;height:25px"><small style="font-size:9px;color:#555;margin:-3px 4px 0 0">123</small>active<span class="dn" style="border-left:1px solid #adadad"></span></span><span class="q justify-content-center" style="width:24px;height:25px;margin-left:6px;font:18px 'DejaVu Serif',serif;line-height:18px;color:#6d3d7c">ε</span></div>
     <div class="d-flex align-items-center" style="height:23px;margin-top:6px"><span class="lb">Symbol</span><span class="q justify-content-center" style="width:336px;height:23px"><span style="width:327px;height:11px;background:#85b66f;border:1px solid #4d6b40"></span></span><span class="q dn" style="width:12px;margin-left:1px;background:#f5f5f5"></span></div>
     <div class="d-flex align-items-center" style="height:25px;margin-top:6px"><span class="lb">Legend format</span><span class="in" style="width:175px;height:25px;padding-left:3px">%1 - %2</span><span class="in" style="width:107px;height:23px;margin-left:6px">Precision 4<span class="spn"></span></span><span class="cb" style="margin:0 5px 0 6px"><svg><use href="#chk"/></svg></span>Trim</div>
     <div class="d-flex align-items-center" style="height:28px;margin-top:6px"><span class="lb">Color ramp</span><span class="q justify-content-center" style="width:336px;height:28px"><span style="width:327px;height:16px;background:linear-gradient(90deg,#fff,red)"></span></span><span class="q dn" style="width:12px;margin-left:1px;background:#f5f5f5"></span></div>
     <div class="d-flex align-items-end" style="height:28px;margin-top:6px;border-bottom:1px solid #b2b2b2"><div class="tabx" style="width:73px;height:28px;margin-bottom:-1px;background:#fdfdfd">Classes</div><div class="tabx" style="width:92px;height:26px;background:#e4e4e4;border-left:0">Histogram</div></div>
     <div class="box" style="height:447px;margin-top:10px">
      <div class="hd d-flex"><div style="width:82px">Symbol<svg width="8" height="4" style="margin-left:19px"><path d="M0 4h8L4 0z" fill="#555"/></svg></div><div style="width:176px">Values</div><div class="border-0">Legend</div></div>
      <div id="cls"></div>
     </div>
     <div class="d-flex align-items-center" style="height:25px;margin-top:6px"><span style="width:42px">Mode</span><span class="q" style="width:195px;height:25px;padding-left:5px"><svg width="16" height="16" style="margin-right:3px"><use href="#quan"/></svg>Equal Count (Quantile)<span class="dn"></span></span><span class="ms-auto" style="margin-right:6px">Classes</span><span class="in" style="width:78px;height:24px">5<span class="spn"></span></span></div>
     <div class="d-flex align-items-start" style="height:25px;margin-top:7px;gap:6px"><span class="q justify-content-center" style="width:80px;height:25px">Classify</span><span class="q justify-content-center" style="width:28px;height:24px"><svg width="14" height="14"><path d="M5 .5h4V5h4.500v4H9v4.500H5V9H.5V5H5z" fill="#fff" stroke="#4d8a4d"/><path d="M7 2.500v9M2.500 7h9" stroke="#4d8a4d" stroke-width="1.500"/></svg></span><span class="q justify-content-center" style="width:28px;height:24px"><svg width="14" height="6"><path d="M.5.500h13v5H.5z" fill="#fff" stroke="#e44"/><path d="M2 3h10" stroke="#e44" stroke-width="2"/></svg></span><span class="q justify-content-center" style="width:80px;height:25px">Delete All</span><span class="q ms-auto" style="width:85px;height:25px;padding-left:3px">Advanced<span class="dn" style="width:15px;transform:scale(.8)"></span></span></div>
     <div class="d-flex align-items-center" style="height:16px;margin-top:9px"><span class="cb" style="margin-right:5px"><svg><use href="#chk"/></svg></span>Link class boundaries</div>
     <div class="d-flex align-items-center fw-bold text-black" style="height:16px;margin-top:20px"><svg width="8" height="11" style="margin:0 11px 0 4px"><path d="M0 0l8 5.500L0 11z" fill="#333"/></svg>Layer Rendering</div>
     <div class="d-flex align-items-center" style="height:25px;margin-top:6px"><span class="q justify-content-center" style="width:24px;height:24px"><svg width="14" height="14"><use href="#undo"/></svg></span><span class="q justify-content-center" style="width:24px;height:24px;margin-left:6px"><svg width="14" height="14"><use href="#redo"/></svg></span><span class="cb ms-auto" style="margin-right:5px"><svg><use href="#chk"/></svg></span><span style="margin-right:13px">Live update</span><span class="q" style="width:80px;height:25px;padding-left:12px"><svg width="16" height="16"><use href="#apl"/></svg>Apply</span></div>
    </div>
   </div>
  </div>
 </div>
 <div class="stat d-flex align-items-center">
  <span class="in" style="width:270px;height:25px;font-size:13px;color:#7b7b7b;padding-left:8px"><svg width="14" height="14" style="margin-right:7px"><circle cx="6" cy="5.500" r="4.500" fill="none" stroke="#8a8a8a" stroke-width="1.300"/><path d="M9 9l4 4" stroke="#8a8a8a" stroke-width="1.800"/></svg>Type to locate (Ctrl+K)</span>
  <span style="width:64px;margin-left:740px">Coordinate</span><span class="in justify-content-center ps-0" style="width:89px;height:22px">113.47,21.40</span>
  <svg width="16" height="18" viewBox="0 0 16 18" style="margin:-2px 13px 0 4px"><path d="M2 4l10 12M4 2l9 9M1 8l7 8M10 5l4-4M3 6l3-3M8 13l4-3" stroke="#333" stroke-width="1.500" fill="none"/><ellipse cx="10" cy="12" rx="4" ry="3.500" transform="rotate(45 10 12)" fill="#eee" stroke="#333"/><ellipse cx="5" cy="6" rx="4" ry="3" transform="rotate(50 5 6)" fill="none" stroke="#333"/></svg>
  <span style="width:37px">Scale</span><span class="in" style="width:93px;height:24px;padding-left:2px">1:7300828<span class="dn" style="border-left:1px solid #adadad"></span></span>
  <svg width="12" height="16" viewBox="0 0 12 16" style="margin:0 9px 0 13px"><path d="M3 7V4q0-3 3-3t3 3v3" fill="none" stroke="#999" stroke-width="1.500"/><rect y="7" width="12" height="9" rx="1.500" fill="#6a6a6a"/></svg>
  <span style="width:55px">Magnifier</span><span class="in" style="width:98px;height:24px">100%<span class="spn"></span></span>
  <span style="width:56px;margin-left:9px">Rotation</span><span class="in" style="width:94px;height:23px">0.0 °<span class="spn"></span></span>
  <span class="cb" style="margin:0 5px 0 6px"><svg><use href="#chk"/></svg></span><span style="width:55px">Render</span>
  <svg width="15" height="15" viewBox="0 0 15 15" style="margin-right:3px"><circle cx="7.500" cy="7.500" r="6" fill="#999" stroke="#666"/><path d="M0 7.500h15M7.500 0v15M2 4h11M2 11h11" stroke="#555"/><ellipse cx="7.500" cy="7.500" rx="3" ry="6.500" fill="none" stroke="#ddd"/></svg><span style="width:83px">EPSG:4326</span>
  <svg width="17" height="15"><ellipse cx="8.500" cy="6.500" rx="8" ry="6" fill="#666"/><path d="M9 11l6 4-1-6z" fill="#666"/><path d="M3.500 6.500h2M7.500 6.500h2M11.500 6.500h2" stroke="#fff" stroke-width="2"/></svg>
  <svg width="11" height="11" style="margin:18px 2px 0 auto"><path d="M10 1v10M7 4v7M4 7v4M1 10v1" stroke="#aaa" stroke-dasharray="1.500 1.500"/></svg>
 </div>
</div>

<div class="dlg">
 <div class="dt text-center"><span>Create print layout Title</span><svg class="position-absolute" style="right:9px;top:10px" width="18" height="18"><circle cx="9" cy="9" r="9" fill="#f5902b"/><path d="M5.800 5.800l6.400 6.400M12.200 5.800l-6.400 6.400" stroke="#fff" stroke-width="2.200"/></svg></div>
 <div style="padding:12px 11px 0">
 <div class="text-nowrap text-black">Enter a unique print layout title<br>(a title will be automatically generated if left empty)</div>
 <div class="in" style="height:25px;margin-top:7px"></div>
 <div class="d-flex justify-content-end" style="margin-top:6px;gap:6px"><span class="q" style="width:80px;height:25px;padding-left:8px"><svg width="17" height="17"><path d="M5 .5h7l4.500 4.500v7L12 16.500H5L.5 12V5z" fill="#cf3c0d" stroke="#8a2404"/><path d="M6 6l5 5M11 6l-5 5" stroke="#fff" stroke-width="1.800"/></svg><span><u>C</u>ancel</span></span><span class="q" style="width:80px;height:25px;padding-left:22px;border-color:#2a6f9e;background:linear-gradient(#fbfcfd,#d9e1e7)"><svg width="16" height="16"><use href="#okic"/></svg><span><u>O</u>K</span></span></div>
 </div>
</div>

<script>
const $=id=>document.getElementById(id);
// toolbars: "|" grip, "," separator, ">" drop-down arrow, leading "-" disabled, "+" pressed
const bar=(id,s)=>{$(id).innerHTML=s.split(' ').map((t,i)=>{
 if(t=='|')return `<span class="grip${i?'':' g0'}"></span>`;
 if(t==',')return '<span class="vs"></span>';
 if(t=='>')return '<span class="ar"></span>';
 if(t=='~')return '<span class="ar lt"></span>';
 const off=t[0]=='-',on=t[0]=='+';
 return `<span class="tb${on?' on':''}${off?' off':''}"><svg><use href="#${t.replace(/^[-+]/,'')}"/></svg></span>`}).join('')};
bar('bar1','| doc open save lay wrench style | +hand pan zin zout zfull zsel zlay -z11 zlast -znext vnew bnew bmk ref | ident -act ~ sel > form > desel tab abac gear sigma meas > tip txt >');
bar('bar2','| dsm gpkgn shpn fean chip , virt | -pens pen -savee -addp -vert ~ -mod -del -cut -copy -paste -undo -redo | label diag , pin rlab , t1 t2 t3 t4 t5 | bino | py earth | help |');
$('tree').innerHTML=[[0,'o','star','Favorites'],[1,'o','folo','02 Loading &amp; Styling Layers in QGIS'],[2,'o','folo','data'],[3,'','csv','sample-CSV-table.csv'],[3,'','csv','sample-CSV.csv'],[3,'','csv','sample-spreadsheet.xlsx'],[3,'o','db','sample.gpkg'],[4,'','ras','Albay - SRTM'],[4,'','polyg','stompcovidph_muncicities_Albay',1],[3,'','poly','stompcovidph_provinces.geojson'],[3,'','poly','stompcovidph_provinces_centroids.shp'],[0,'c','bmk','Spatial Bookmarks'],[0,'c','home','Home'],[0,'c','fol','/'],[0,'','gpkg','GeoPackage'],[0,'','fea','SpatiaLite'],[0,'','ele','PostGIS'],[0,'','ms','MSSQL'],[0,'','db2','DB2'],[0,'o','glb','WMS/WMTS'],[1,'c','fork','LiPAD 100-year Flood Hazard'],[0,'c','glb','XYZ Tiles']]
.map(([d,e,i,t,s])=>`<div class="r19 ind${d}${s?' sel':''}" style="margin-right:${s?4:0}px"><span class="ex ${e}"></span><span style="width:3px"></span><svg><use href="#${i}"/></svg>${t}</div>`).join('');
$('cls').innerHTML=[['#fff','0.000000 - 0.000000','0 - 0'],['#ffbfbf','0.000000 - 0.000000','0 - 0'],['#ff8080','0.000000 - 2.000000','0 - 2'],['#ff4040','2.000000 - 20.800000','2 - 20.8'],['#f00','20.800000 - 2045.000000','20.8 - 2045']]
.map(([c,a,b])=>`<div class="cls"><span class="cb"><svg><use href="#chk"/></svg></span><span class="sw" style="background:${c}"></span><span class="text-nowrap" style="width:176px;margin-left:46px">${a}</span>${b}</div>`).join('');

// Philippine provinces; coastlines are roughened by midpoint displacement
const W='#fff',N='none',P='#ff7f7f',R='#ff4040',F='#ff0000';
const rnd=(a,b,c)=>{const v=Math.sin(a*12.9898+b*78.233+c*37.719)*43758.5453;return (v-Math.floor(v))-.5};
function rough(p,k){const o=[p[0]];
 const seg=(a,b)=>{const d=Math.hypot(b[0]-a[0],b[1]-a[1]);
  if(d<6){o.push(b);return}
  const s=a[0]+b[0],t=a[1]+b[1],m=[s/2+rnd(s,t,1)*d*k,t/2+rnd(s,t,2)*d*k];seg(a,m);seg(m,b)};
 for(let i=1;i<p.length;i++)seg(p[i-1],p[i]);return o}
let out='';
const frame=(x,y,sx,sy,list,specks)=>{out+=`<g transform="translate(${x} ${y}) scale(${sx} ${sy})" stroke="#262626" stroke-width=".9" stroke-linejoin="round">`;
 for(const [c,s,k] of list){let z=s.endsWith('Z'),n=s.replace('Z','').trim().split(/[ ,]+/).map(Number),p=[];
  for(let i=0;i+1<n.length;i+=2)p.push([n[i],n[i+1]]);if(z)p.push(p[0]);
  out+=`<path vector-effect="non-scaling-stroke" fill="${c}" d="M${rough(p,(k??.22)*1.25).map(q=>q[0].toFixed(1)+' '+q[1].toFixed(1)).join('L')}"/>`}
 for(const [cx,cy,rx,ry,n,r,c] of specks||[])for(let i=0;i<n;i++){
  const an=rnd(cx,i,3)*6.283,di=Math.sqrt(rnd(cy,i,4)+.5),a=cx-1+Math.cos(an)*di*rx,b=cy-1+Math.sin(an)*di*ry,q=Math.max(1.5,r*.62)*(.5+(rnd(i,cx,5)+.5)*.9);
  out+=`<path vector-effect="non-scaling-stroke" stroke-width=".8" fill="${c||N}" d="M${a.toFixed(1)} ${b.toFixed(1)}l${(q).toFixed(1)} ${(-q*.7).toFixed(1)} ${(q*.4*rnd(i,cy,6)).toFixed(1)} ${(q).toFixed(1)} ${(-q).toFixed(1)} ${(q*.8).toFixed(1)}${i%2?'z':''}"/>`}
 out+='</g>'};
const T=1/3;
frame(780,190,T,T,[
[W,'250,432 247,470 243,490 248,505 244,520 268,537 275,560 290,567 318,562 304,543 322,515 327,478 300,460 262,436 Z',.12],
[W,'172,527 163,545 168,560 160,585 172,600 168,640 174,677 200,680 222,675 222,645 208,636 190,618 192,600 178,590 182,565 188,557 182,540 Z'],
[W,'188,557 205,545 225,528 244,520 268,540 270,570 252,590 242,628 225,638 208,636 190,618 192,600 178,590 182,565 Z'],
[W,'270,570 290,567 318,562 352,587 350,600 336,622 310,622 295,636 270,632 242,628 252,590 Z'],
[W,'242,628 270,632 295,636 310,622 336,622 338,652 300,658 250,662 240,690 222,670 222,645 Z',.12],
[W,'352,587 428,583 440,610 462,618 466,645 478,648 470,685 455,710 435,738 410,735 390,744 358,744 345,722 312,718 305,703 341,680 338,652 336,622 350,600 Z',.12],
[N,'312,712 310,744',.1],[N,'298,713 312,718',.1],[N,'385,746 410,735 440,740',.1],
[P,'172,527 180,505 186,482 196,460 192,440 205,436 220,434 226,422 236,424 239,432 250,432 247,470 243,490 248,505 244,520 225,528 205,545 188,557 182,530 Z',.15],
[P,'250,432 280,424 300,434 330,456 350,467 375,475 395,475 415,462 424,440 436,438 440,452 452,466 446,488 430,500 424,540 428,583 352,587 318,562 304,543 322,515 327,478 300,460 262,436 250,448 Z',.12],
[P,'419,430 424,432 426,442 420,440 Z',0],
[P,'240,690 250,665 300,658 338,652 341,680 330,690 305,703 298,713 240,721 Z',.15],
[R,'155,690 165,677 182,677 188,700 190,712 178,730 176,750 152,750 150,715 Z',.15],
[R,'200,680 215,676 235,680 240,690 240,750 172,750 190,722 198,712 Z',.1],
[P,'386,290 393,284 402,287 400,296 392,298 Z',.1],[P,'307,312 321,310 334,318 332,330 318,326 Z',.1],[P,'284,346 290,344 293,362 287,366 Z',.1],[P,'290,385 305,386 324,383 322,390 295,391 Z',.1],[P,'376,392 378,376 388,367 400,376 392,386 382,395 Z',.1],
[N,'372,104 380,98 384,104 376,118 370,114 Z'],[N,'388,165 398,150 406,150 400,162 392,172 Z'],[N,'376,176 384,172 382,181 Z']],
[[391,64,1,1,1,2],[390,85,2,2,3,2],[390,118,1,1,2,2],[373,172,4,3,4,3],[397,158,6,5,4,4],[423,227,1,1,2,2],[430,357,1,1,1,2],[330,304,1,1,1,2],[287,370,1,1,1,2],[464,638,6,18,5,4],[172,530,10,12,4,5]]);
frame(640,580,T,T,[
[R,'575,0 720,0 742,60 757,67 748,85 748,115 755,135 742,160 738,180 710,196 690,190 670,165 662,140 642,115 640,85 620,55 598,36 Z',.14],
[N,'590,20 645,40 710,72 710,196',.03],
[N,'115,767 120,735 145,700 175,668 200,650 225,632 245,622 280,580 320,545 335,515 350,497 375,490 385,460 410,450 428,430 430,405'],
[N,'118,767 160,742 168,722 195,718 235,685 252,655 290,642 325,600 345,565 345,535 380,524 410,515 420,490 460,470 485,445 472,420 468,390'],
[N,'430,405 415,395 425,370 415,350 435,345 440,325 460,320 455,345 465,370 452,385 455,400 468,400',.6],
[N,'480,330 475,360 490,372 470,375 462,350 480,330 478,310 500,305 505,290 520,280 515,300 500,318 485,318',.6],
[N,'510,190 545,205 580,220 570,235 530,232 505,232 512,210 505,195 Z',.35],[N,'508,235 530,240 560,270 545,278 520,262 530,240 575,250',.5],[N,'485,445 500,432 520,435 528,448 510,458 492,455 Z',.5],
[N,'80,808 98,805 97,835 88,847 78,835 Z',.4],[N,'112,770 130,768 137,788 125,796 112,790 Z',.5],
[N,'835,900 840,850 860,820 900,805',.2],[N,'855,900 870,865 900,840'],
[R,'725,212 732,212 736,228 730,230 Z'],[R,'680,185 692,190 690,205 682,200 Z'],[R,'738,250 752,252 748,257 738,256 Z']],
[[540,218,38,42,34,11],[530,255,25,20,22,12],[500,300,22,14,20,9],[430,370,18,50,34,11],[470,360,20,24,18,12],[470,420,10,20,10,8],[400,455,25,15,18,9],[350,510,12,14,6,7],[345,550,10,16,7,8],[110,785,24,14,10,7],[225,632,14,7,6,5],[252,657,6,6,3,6],[300,635,10,5,4,4],[440,482,20,8,6,4],[510,445,22,14,10,6],
[668,365,44,52,44,4],[680,400,10,8,6,9],[548,318,8,6,5,5],[590,132,2,2,2,3],[565,340,4,3,2,3],[570,425,10,6,5,4],[570,190,14,12,8,5],[640,318,8,6,5,5],[708,580,8,6,4,5],[676,581,1,1,1,3],[722,570,3,8,2,2],[648,631,1,1,1,3],[118,835,3,14,4,3],[308,855,1,1,1,3],[332,826,1,1,1,2],[128,888,2,3,2,4],[268,688,1,1,1,2],[160,768,1,1,1,2],[776,289,1,1,1,3],[808,307,1,1,2,3],[773,331,1,1,1,2],[735,180,8,12,6,5,R],[688,193,8,10,5,5,R],[757,240,3,10,3,4],[720,250,3,3,1,3]]);
frame(880,580,T,T,[
[F,'285,20 370,20 372,66 355,80 330,78 300,82 290,70 298,50 Z'],[F,'176,30 204,30 202,48 190,56 178,48 Z'],[F,'366,36 400,42 405,46 428,52 426,56 400,50 378,48 Z',.3],[F,'355,78 380,64 386,70 372,80 Z'],
[P,'325,82 372,76 385,70 420,72 425,80 418,110 412,150 395,148 375,124 385,100 345,98 Z'],[W,'373,93 390,87 400,90 396,99 380,102 Z',.1],
[W,'240,62 260,66 275,88 292,105 303,124 285,114 268,104 258,88 242,74 Z'],[N,'75,44 90,42 100,52 110,40',.4],
[W,'285,142 300,150 330,172 345,185 372,195 385,225 405,245 407,270 385,248 365,232 345,205 325,197 305,215 272,242 278,225 298,190 280,178 290,165 Z',.3],
[W,'335,127 350,136 368,166 363,176 348,160 Z'],
[P,'104,140 120,134 117,160 112,190 98,198 92,170 Z'],[P,'136,135 144,142 148,157 140,156 Z'],[P,'165,163 182,155 198,161 206,180 195,188 170,176 Z'],[P,'98,198 108,204 102,212 96,206 Z'],
[W,'90,238 120,250 150,270 170,285 190,298 228,290 250,305 268,300 258,318 235,335 215,345 185,350 150,345 135,352 127,320 127,300 125,262 105,258 82,262 Z',.2],
[N,'132,332 165,315 190,300',.15],
[R,'82,262 105,258 125,262 127,300 132,340 148,378 110,428 95,463 88,455 95,420 112,380 108,320 110,280 90,265 Z',.12],
[R,'148,378 135,352 150,345 185,350 215,345 235,335 258,315 268,295 273,320 262,350 218,378 215,398 165,405 125,425 100,455 112,425 Z',.16],
[W,'188,418 206,414 210,434 196,459 176,463 178,440 Z'],
[R,'240,390 270,380 310,380 328,392 325,430 300,462 272,465 275,490 235,555 195,605 160,570 158,550 180,535 215,530 230,500 222,460 230,420 Z',.12],
[W,'272,465 298,468 292,500 270,545 270,580 295,625 285,655 250,665 230,650 225,625 195,605 235,555 275,490 Z',.12],
[F,'405,338 400,365 400,400 402,450 390,485 355,505 330,560 300,608 294,600 305,530 330,490 360,440 380,400 388,350 Z',.12],
[F,'352,350 358,334 368,350 360,356 Z'],[F,'438,436 442,424 456,424 466,420 472,434 455,436 Z',.3],
[P,'365,545 400,510 440,500 475,508 482,530 485,555 460,575 420,585 385,578 365,560 Z',.16],[P,'358,586 374,577 376,584 364,591 Z'],
[W,'316,640 330,637 345,627 351,642 339,656 328,647 Z'],[W,'490,640 500,633 512,645 513,657 502,656 492,652 Z',.1],
[W,'438,150 470,158 500,158 540,148 575,152 590,168 588,185 612,200 626,220 608,240 610,290 630,330 640,360 580,358 585,285 580,240 562,230 565,185 545,188 520,190 480,182 450,188 Z',.28],
[R,'450,188 480,182 520,190 545,188 565,185 562,230 580,240 585,285 582,320 580,360 550,330 530,310 505,285 510,268 525,275 532,262 520,235 490,222 465,208 Z',.2],[W,'530,272 545,264 547,280 533,288 Z'],
[W,'446,280 465,272 486,290 482,308 462,306 Z',.15],
[R,'440,300 450,315 470,315 485,330 510,330 545,315 550,340 548,410 565,432 540,455 530,470 512,500 508,480 515,430 505,400 480,380 460,395 452,360 Z',.16],
[W,'512,498 530,480 540,470 545,455 565,436 580,460 577,500 555,474 548,490 570,525 580,538 560,524 540,495 548,520 535,508 Z',.15],[N,'552,475 566,510 585,538',.15],
[W,'638,458 641,505 638,540 620,540 612,510 618,482 628,488 Z',.5],[W,'640,408 655,402 664,414 658,422 Z'],
[P,'685,538 690,532 700,516 706,540 714,550 702,560 692,556 Z'],[P,'678,566 692,564 684,588 Z'],
[P,'605,562 620,556 635,568 655,585 672,600 657,620 640,606 612,605 603,580 Z',.16],
[P,'612,605 640,606 655,612 655,640 645,670 640,716 580,720 578,675 600,680 622,665 622,640 Z',.12],
[W,'657,618 672,600 700,630 718,630 720,655 738,690 708,722 705,735 745,745 755,775 745,790 757,825 742,820 738,790 735,770 700,735 690,690 670,660 Z',.3],
[W,'580,720 640,716 645,670 655,640 657,618 670,660 690,690 700,735 735,770 738,790 742,820 702,822 695,830 688,821 602,822 595,780 583,755 Z',.08],
[R,'512,680 525,672 555,690 574,684 574,660 580,690 578,733 518,733 518,755 488,758 478,770 437,770 440,745 465,730 490,745 512,740 Z',.12],
[W,'488,758 518,755 518,733 578,733 583,755 595,780 602,822 605,850 590,875 580,892 545,908 520,900 515,875 490,830 475,798 482,780 Z',.1],
[W,'395,862 405,840 430,820 440,795 475,798 490,830 515,875 465,870 425,900 Z',.1],[N,'345,838 380,865 405,875 425,900',.15],
[P,'345,825 375,800 430,790 437,770 478,770 482,785 475,798 440,790 430,820 405,840 395,862 360,860 Z',.16],
[W,'88,945 90,935 110,910 120,850 135,825 200,800 240,800 242,770 252,745 300,738 310,715 330,725 332,785 280,785 278,815 240,835 200,835 155,850 132,870 130,898 120,942 Z',.16],
[W,'130,898 132,870 155,850 200,835 240,835 262,855 270,870 262,880 245,880 238,895 222,890 228,870 215,850 185,860 158,902 Z',.25],
[R,'332,725 355,735 375,770 375,795 345,815 332,790 Z',.12],
[F,'280,785 330,787 335,805 345,825 345,838 320,850 318,870 300,885 315,910 303,912 290,890 270,892 262,855 240,838 265,825 278,815 Z',.15],
[F,'130,898 158,902 155,918 142,920 135,960 125,980 105,980 88,960 88,945 120,942 Z',.12],
[W,'78,1025 90,1005 120,1007 130,1018 148,1020 134,1040 124,1052 104,1054 84,1038 Z',.3],[N,'92,1022 108,1004 110,1026 Z'],
[N,'222,898 240,908 230,925 220,915 Z',.5],
[R,'465,870 480,872 515,875 520,900 545,908 580,892 585,960 570,985 560,1005 520,1000 512,950 500,940 500,965 480,965 462,940 458,915 Z',.15],
[W,'425,900 465,870 460,915 445,938 432,930 438,915 Z',.15],[R,'424,934 442,944 432,940 Z'],
[W,'432,938 445,944 462,940 480,965 500,965 495,945 512,950 520,1000 505,1002 495,985 482,990 478,1005 400,1003 392,975 400,945 Z',.16],
[W,'400,1003 478,1005 482,990 505,1002 520,1014 560,1005 575,1035 525,1035 505,1020 490,1040 490,1065 440,1068 455,1092 440,1090 402,1050 Z',.12],
[P,'440,1068 490,1065 490,1040 505,1020 525,1035 572,1035 558,1060 582,1075 575,1095 560,1100 552,1113 510,1112 480,1100 Z',.12],
[P,'450,1088 480,1100 510,1112 552,1113 562,1105 555,1134 530,1135 490,1120 455,1100 Z',.1],
[W,'600,1050 605,1025 640,1055 650,1095 630,1150 605,1180 590,1178 612,1125 620,1100 610,1072 575,1060 Z',.12],
[P,'562,1050 590,1070 612,1070 620,1100 605,1150 598,1176 570,1140 585,1120 582,1075 558,1060 Z',.14],
[P,'602,822 645,822 648,860 665,880 676,850 683,855 682,870 670,905 640,928 620,930 620,884 582,882 605,875 Z',.15],
[W,'645,822 688,821 695,830 715,825 725,870 735,925 680,955 670,910 682,870 683,855 676,850 665,880 648,860 Z',.1],
[W,'715,825 742,820 748,850 775,865 778,905 760,950 735,975 745,990 730,1000 720,1070 708,1030 705,1000 680,955 735,925 725,870 Z',.2],
[F,'580,882 620,884 620,928 640,932 640,945 610,965 605,1000 600,1050 572,1050 562,1000 585,960 580,930 Z',.1],
[P,'645,940 658,938 660,978 651,975 650,952 Z'],[N,'718,980 730,975 744,990 730,1000 Z'],
[N,'595,1200 606,1193 606,1205 598,1206 Z',.1],[N,'610,1192 617,1188 613,1202 Z',.1]],
[[295,295,30,10,14,6],[275,325,8,30,8,7,R],[180,292,18,10,10,7],[400,170,25,6,6,6],[425,165,10,12,6,7],[455,140,12,12,12,8],[550,138,10,10,12,7],[515,290,14,14,14,9,R],[445,242,20,10,8,6],[425,220,4,4,3,5,R],[500,255,20,20,8,6],[360,235,38,22,22,4],[430,493,50,10,46,3],[375,520,12,12,10,3],[480,510,8,6,4,8,P],[395,482,10,8,6,7,F],[400,310,18,10,3,3],[330,372,20,12,6,4],[110,92,4,4,3,5,R],[112,108,3,3,2,5,R],[60,92,2,2,2,4,R],[92,222,3,4,3,5,R],[10,230,6,16,5,6,R],[35,240,6,10,4,6,R],[18,215,8,6,2,4],[630,545,20,18,26,9],[660,370,14,20,9,7],[640,350,16,14,10,6],[615,235,14,60,24,6],[690,600,20,12,14,5],[650,540,16,4,4,4],[715,575,6,10,5,4],[735,750,20,20,12,8],[748,800,10,20,10,7],[725,985,8,8,4,7],[228,905,14,18,8,8],[320,718,12,6,6,4],[280,680,2,2,2,3],[305,690,4,8,3,3],[350,665,2,4,2,3],[150,970,12,6,5,5,R],[170,890,14,8,5,4],[145,1022,12,16,8,4],[30,1000,16,18,10,5],[40,1020,8,8,8,8],[80,1020,10,10,6,6],[98,1065,6,4,5,6],[185,432,12,14,5,6],[645,950,8,14,5,5,P],[685,412,2,2,1,4],[475,408,8,8,4,4,R],[10,1115,16,8,10,7],[55,1105,14,12,14,7],[85,1105,10,5,5,7],[90,1075,4,6,3,3],[20,990,4,4,2,3],[0,570,3,10,3,3],[455,195,4,20,6,4],[405,915,6,6,3,4],[120,60,12,6,4,3]]);
frame(740,880,1/2.24,T,[
[N,'265,215 280,203 300,205 310,212 326,212 322,226 308,232 300,225 285,232 270,228 Z',.4],
[N,'140,355 148,335 170,322 190,312 202,312 205,325 198,342 180,340 172,352 158,345 145,358 Z',.5],[N,'108,376 113,380 114,400 110,412 106,404 Z',.2],[N,'102,414 104,400 106,414 Z',.2],
[N,'232,155 238,152 240,168 228,180 Z',.3],[N,'258,274 270,272 274,288 262,292 Z',.5],[N,'362,196 372,208 382,204 380,214 368,212 Z',.3],[N,'295,235 305,232 304,246 294,244 Z',.4]],
[[3,65,3,8,3,5],[2,140,1,2,1,4],[2,185,2,5,2,4],[248,156,10,6,6,4],[220,195,10,10,8,5],[273,188,8,9,9,6],[172,226,10,8,8,4],[135,240,5,3,4,4],[205,250,10,14,8,4],[350,208,14,12,10,5],[320,218,10,10,8,6],[265,258,8,6,8,6],[283,256,5,6,4,5],[263,284,10,10,10,7],[185,330,22,20,26,9],[165,345,22,14,18,8],[210,325,10,14,10,8],[232,325,10,12,8,4],[194,298,5,4,4,4],[152,378,5,12,6,6],[165,368,6,8,5,5],[110,415,4,8,4,4],[298,240,6,5,5,6],[346,176,1,1,1,3],[330,100,4,8,3,4],[368,195,6,8,4,5]]);
$('map').innerHTML=out;
</script>
</body>
</html>
